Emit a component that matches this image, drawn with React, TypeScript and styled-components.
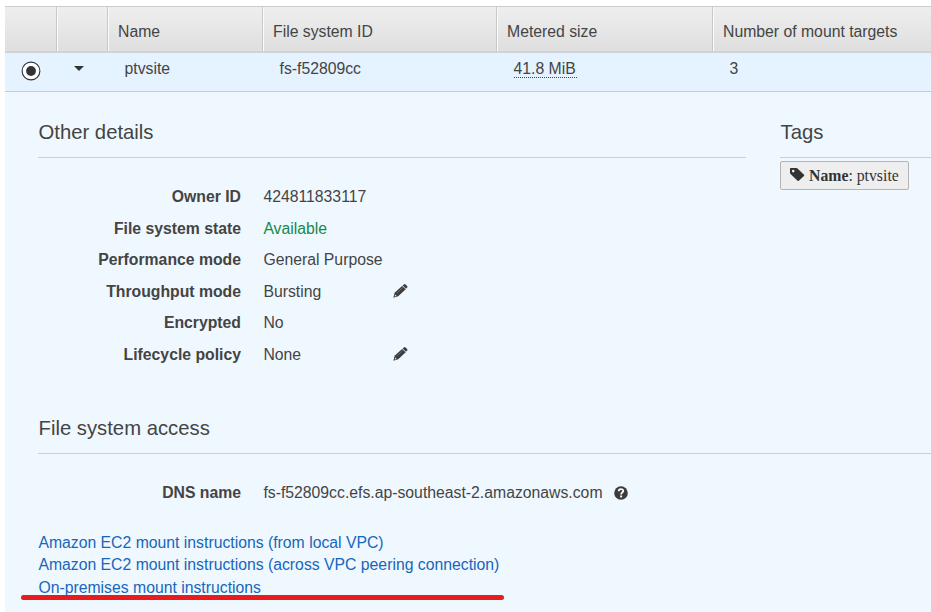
import React from "react";
import styled, { createGlobalStyle } from "styled-components";

const GlobalStyle = createGlobalStyle`
  *, *::before, *::after { box-sizing: border-box; }
  body { margin: 0; background: #fff; overflow: hidden; }
`;

const Page = styled.main`
  position: relative;
  width: 931px;
  height: 612px;
  padding: 6px 0 0 5px;
  display: flex;
  flex-direction: column;
  font: 15.78px/20px "Liberation Sans", Arial, sans-serif;
  color: #444;
  white-space: nowrap;
  overflow: hidden;
`;

const columns = "52px 51px 155px 234px 216px 1fr";

const HeaderRow = styled.div`
  display: grid;
  grid-template-columns: ${columns};
  flex: 0 0 47px;
  border-top: 1px solid #ccc;
  border-bottom: 2px solid #cfd3d6;
  background: linear-gradient(#eee, #dfdfdf);
`;

const HeaderCell = styled.div`
  padding: 15px 0 0 9px;
  border-left: 1px solid #fbfbfb;
  border-right: 1px solid #c8c8c8;
  &:first-child { border-left: 0; }
  &:last-child { border-right: 0; }
`;

const DataRow = styled.div`
  display: grid;
  grid-template-columns: ${columns};
  flex: 0 0 39px;
  border-bottom: 1px solid #c5cbd0;
  background: #e5f2ff;
`;

const Cell = styled.div`
  padding: 6px 0 0 16.5px;
`;

const IconCell = styled.div<{ $top: number; $left: number }>`
  padding: ${(p) => p.$top}px 0 0 ${(p) => p.$left}px;
  svg { display: block; }
`;

const Metered = styled.span`
  display: block;
  width: 63px;
  height: 19px;
  border-bottom: 1px dotted #444;
`;

const Details = styled.section`
  flex: 1;
  padding: 29px 0 0 33px;
  background: #f0f8ff;
`;

const TopPanels = styled.div`
  display: grid;
  grid-template-columns: 708px 1fr;
  column-gap: 34px;
  height: 296px;
`;

const Heading = styled.h2`
  margin: 0;
  height: 37px;
  border-bottom: 1px solid #c8d0d2;
  font-size: 20.3px;
  line-height: 23px;
  font-weight: 400;
  text-indent: 0.5px;
`;

const Properties = styled.dl`
  margin: 0;
  padding-top: 29px;
  display: grid;
  grid-template-columns: 203px 130px auto;
  grid-auto-rows: 31.5px;
`;

const Label = styled.dt`
  text-align: right;
  font-weight: 700;
`;

const Value = styled.dd<{ $good?: boolean; $wide?: boolean }>`
  margin: 0;
  padding-left: 22.4px;
  grid-column: ${(p) => (p.$wide ? "2 / 4" : "2")};
  color: ${(p) => (p.$good ? "#15884a" : "inherit")};
  svg { margin-left: 11px; vertical-align: -2px; }
`;

const Edit = styled.div`
  padding: 2px 0 0 22px;
  svg { display: block; }
`;

const Tag = styled.div`
  display: inline-flex;
  align-items: center;
  margin-top: 3px;
  width: 129px;
  height: 29px;
  padding-left: 9px;
  border: 1px solid #b4b4b4;
  border-radius: 2px;
  background: #eee;
  color: #333;
  font: 15.78px/20px "Liberation Serif", "Times New Roman", serif;
  svg { margin: -2px 4px 0 0; }
`;

const Links = styled.nav`
  display: flex;
  flex-direction: column;
  align-items: flex-start;
  padding: 17px 0 0 0.4px;
`;

const MountLink = styled.a`
  color: #1666bb;
  line-height: 22.7px;
  text-decoration: none;
`;

const Marker = styled.div`
  position: absolute;
  left: 21px;
  top: 595px;
  width: 483px;
  height: 5px;
  border-radius: 3px;
  background: #e81b1e;
`;

const RadioIcon = () => (
  <svg width="20" height="20" viewBox="0 0 20 20">
    <circle cx="10" cy="10" r="8.9" fill="#fff" stroke="#333" strokeWidth="1.1" />
    <circle cx="10" cy="10" r="4.9" fill="#333" />
  </svg>
);

const CaretIcon = () => (
  <svg width="10" height="5" viewBox="0 0 10 5" fill="#333">
    <path d="M0 0h10L5 5z" />
  </svg>
);

const PencilIcon = () => (
  <svg width="15" height="14" viewBox="0 0 15 14" fill="#3c3c3c">
    <path d="M9.7 1.5 10.9.4Q11.7-.2 12.5.5L14.1 2.1Q14.8 2.8 14.1 3.6L13 4.7Z" />
    <path d="M9.1 1.9 12.7 5.3 5.2 12.3 .4 13.7 1.6 8.8Z" />
    <path d="M2.2 10.6 3.7 12.1 2.1 12.6 1.7 12.2Z" fill="#dfe6ec" />
    <path d="M3.6 9.3 9.7 3.7" stroke="#8b8f92" strokeWidth=".6" />
    <path d="M9.3 1.9 12.7 5.1" stroke="#8b8f92" strokeWidth=".5" />
  </svg>
);

const TagIcon = () => (
  <svg width="15" height="14" viewBox="0 0 15 14" fill="#333">
    <path
      fillRule="evenodd"
      d="M.8 0H6.3Q7 0 7.5.5L14 6.7Q14.6 7.3 14 7.9L8.8 12.8Q8.2 13.4 7.6 12.8L.5 5.9Q0 5.4 0 4.8V.8Q0 0 .8 0ZM3.2 1.8A1.3 1.3 0 1 0 3.2 4.4A1.3 1.3 0 1 0 3.2 1.8Z"
    />
  </svg>
);

const QuestionIcon = () => (
  <svg width="14" height="14" viewBox="0 0 14 14">
    <circle cx="7" cy="7" r="6.8" fill="#3c3c3c" />
    <path d="M4.7 5.3Q4.7 3.2 7 3.2T9.2 5.1C9.2 6.7 7.1 6.5 7.1 8.4" fill="none" stroke="#fff" strokeWidth="1.8" />
    <path d="M6.1 9.5h2v1.9h-2z" fill="#fff" />
  </svg>
);

const properties = [
  { label: "Owner ID", value: "424811833117" },
  { label: "File system state", value: "Available", good: true },
  { label: "Performance mode", value: "General Purpose" },
  { label: "Throughput mode", value: "Bursting", editable: true },
  { label: "Encrypted", value: "No" },
  { label: "Lifecycle policy", value: "None", editable: true },
];

const links = [
  "Amazon EC2 mount instructions (from local VPC)",
  "Amazon EC2 mount instructions (across VPC peering connection)",
  "On-premises mount instructions",
];

export default function App() {
  return (
    <>
      <GlobalStyle />
      <Page>
        <HeaderRow>
          {["", "", "Name", "File system ID", "Metered size", "Number of mount targets"].map((title, i) => (
            <HeaderCell key={i}>{title}</HeaderCell>
          ))}
        </HeaderRow>
        <DataRow>
          <IconCell $top={8} $left={16}><RadioIcon /></IconCell>
          <IconCell $top={13} $left={17}><CaretIcon /></IconCell>
          <Cell>ptvsite</Cell>
          <Cell>fs-f52809cc</Cell>
          <Cell><Metered>41.8 MiB</Metered></Cell>
          <Cell>3</Cell>
        </DataRow>
        <Details>
          <TopPanels>
            <section>
              <Heading>Other details</Heading>
              <Properties>
                {properties.map((p) => (
                  <React.Fragment key={p.label}>
                    <Label>{p.label}</Label>
                    <Value $good={p.good}>{p.value}</Value>
                    <Edit>{p.editable && <PencilIcon />}</Edit>
                  </React.Fragment>
                ))}
              </Properties>
            </section>
            <section>
              <Heading>Tags</Heading>
              <Tag><TagIcon /><span><b>Name</b>: ptvsite</span></Tag>
            </section>
          </TopPanels>
          <Heading>File system access</Heading>
          <Properties>
            <Label>DNS name</Label>
            <Value $wide>fs-f52809cc.efs.ap-southeast-2.amazonaws.com<QuestionIcon /></Value>
          </Properties>
          <Links>
            {links.map((text) => <MountLink key={text}>{text}</MountLink>)}
          </Links>
        </Details>
        <Marker />
      </Page>
    </>
  );
}
